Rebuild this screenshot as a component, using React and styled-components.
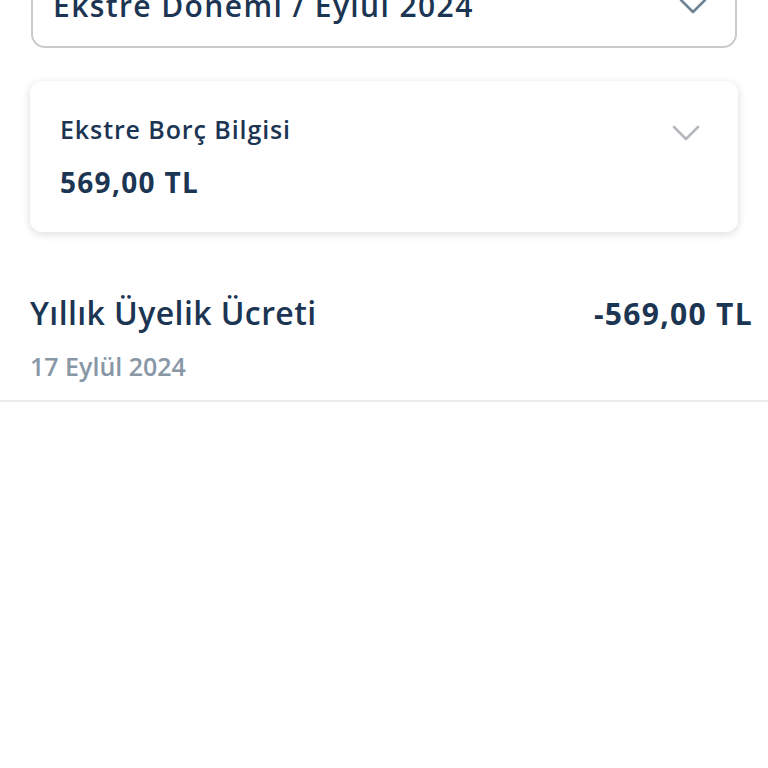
import React from "react";
import styled, { createGlobalStyle } from "styled-components";

const Global = createGlobalStyle`
  html, body {
    margin: 0;
    padding: 0;
    background: #ffffff;
    font-family: "Open Sans", "Noto Sans", sans-serif;
    overflow: hidden;
  }
`;

const Page = styled.div`
  width: 768px;
  height: 768px;
  display: flex;
  flex-direction: column;
  background: #fff;
`;

const Top = styled.div`
  padding: 0 31px;
  margin-top: -37px;
`;

const Select = styled.div`
  height: 85px;
  box-sizing: border-box;
  border: 2px solid #c9cbcd;
  border-radius: 14px;
  display: flex;
  align-items: center;
  justify-content: space-between;
  padding: 0 28px 0 20px;
  color: #1b3553;
  font-size: 30px;
  font-weight: 600;
  letter-spacing: 1.4px;
  line-height: 40px;
`;

const Card = styled.div`
  margin: 33px 30px 0;
  background: #fff;
  border-radius: 12px;
  box-shadow: 0 2px 8px rgba(0, 0, 0, 0.14);
  padding: 32px 38px 32px 30px;
  display: flex;
  justify-content: space-between;
  align-items: flex-start;
`;

const CardText = styled.div`
  display: flex;
  flex-direction: column;
  gap: 19px;
`;

const Label = styled.div`
  color: #1b3553;
  font-size: 25px;
  font-weight: 600;
  letter-spacing: 0.9px;
  line-height: 32px;
`;

const Amount = styled.div`
  color: #1b3553;
  font-size: 28px;
  line-height: 36px;
  font-weight: 700;
  letter-spacing: 1.3px;
`;

const Chevron = styled.svg`
  display: block;
  flex: none;
  margin-top: ${(p) => p.$top || 0}px;
`;

const Row = styled.div`
  margin-top: 61px;
  padding: 0 15px 18px 30px;
  border-bottom: 2px solid #ececec;
  display: flex;
  flex-direction: column;
  gap: 16px;
`;

const RowHead = styled.div`
  display: flex;
  justify-content: space-between;
  align-items: baseline;
  color: #1b3553;
  font-size: 32px;
  font-weight: 600;
  letter-spacing: 0.4px;
  line-height: 40px;
`;

const Strong = styled.span`
  font-size: 30px;
  font-weight: 700;
  letter-spacing: 1.3px;
`;

const Date = styled.div`
  color: #8897a6;
  font-size: 25px;
  font-weight: 600;
  line-height: 32px;
`;

function Down({ color, width = 28, top }) {
  return (
    <Chevron $top={top} width={width} height={width / 2 + 4} viewBox="0 0 28 18">
      <path d="M2 3 L14 15 L26 3" fill="none" stroke={color} strokeWidth="2.6" strokeLinecap="round" strokeLinejoin="round" />
    </Chevron>
  );
}

export default function App() {
  return (
    <Page>
      <Global />
      <Top>
        <Select>
          <span>Ekstre Dönemi / Eylül 2024</span>
          <Down color="#6f8396" />
        </Select>
      </Top>
      <Card>
        <CardText>
          <Label>Ekstre Borç Bilgisi</Label>
          <Amount>569,00 TL</Amount>
        </CardText>
        <Down color="#b4b8bc" top={11} />
      </Card>
      <Row>
        <RowHead>
          <span>Yıllık Üyelik Ücreti</span>
          <Strong>-569,00 TL</Strong>
        </RowHead>
        <Date>17 Eylül 2024</Date>
      </Row>
    </Page>
  );
}
